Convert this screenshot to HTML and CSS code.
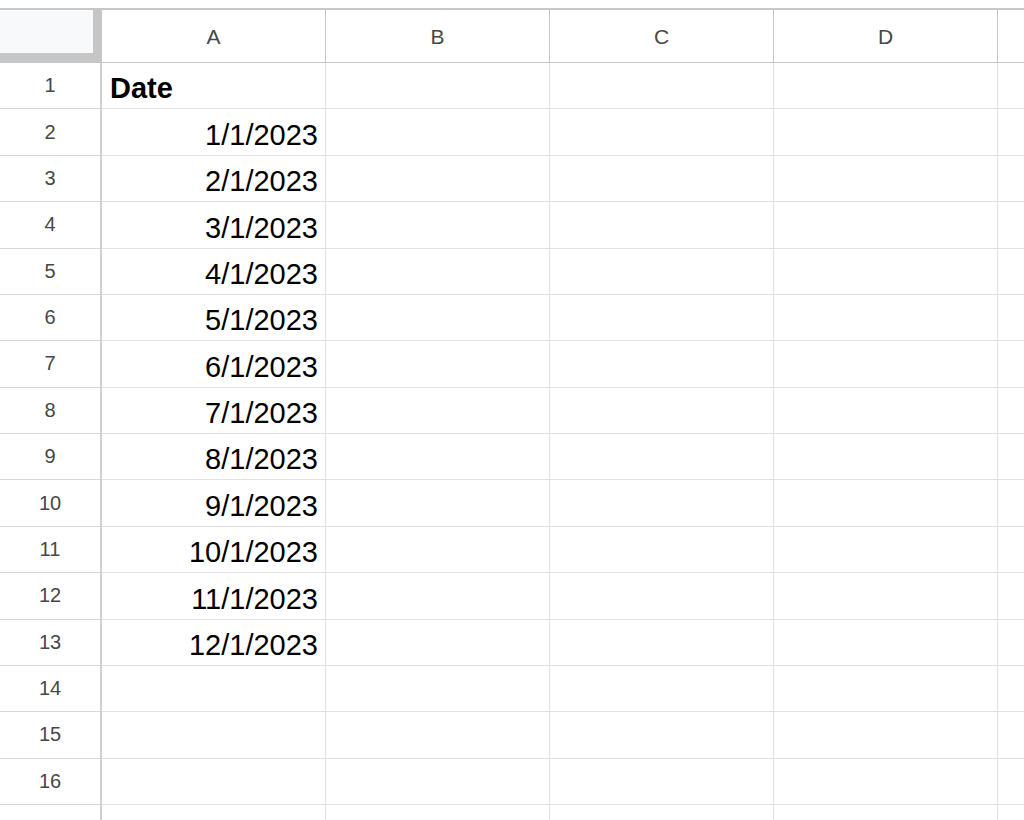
FILE: index.html
```html
<!DOCTYPE html>
<html lang="en">
<head>
  <meta charset="UTF-8">
  <meta name="viewport" content="width=device-width, initial-scale=1.0">
  <title>Sheet</title>
  <link rel="stylesheet" href="styles.css">
</head>
<body>
  <div class="sheet">
    <div class="row head">
      <div class="corner"></div>
      <div class="col">A</div>
      <div class="col">B</div>
      <div class="col">C</div>
      <div class="col">D</div>
      <div class="col"></div>
    </div>
    <div class="row"><div class="num">1</div><div class="cell bold">Date</div><div class="cell"></div><div class="cell"></div><div class="cell"></div><div class="cell"></div></div>
    <div class="row"><div class="num">2</div><div class="cell date">1/1/2023</div><div class="cell"></div><div class="cell"></div><div class="cell"></div><div class="cell"></div></div>
    <div class="row"><div class="num">3</div><div class="cell date">2/1/2023</div><div class="cell"></div><div class="cell"></div><div class="cell"></div><div class="cell"></div></div>
    <div class="row"><div class="num">4</div><div class="cell date">3/1/2023</div><div class="cell"></div><div class="cell"></div><div class="cell"></div><div class="cell"></div></div>
    <div class="row"><div class="num">5</div><div class="cell date">4/1/2023</div><div class="cell"></div><div class="cell"></div><div class="cell"></div><div class="cell"></div></div>
    <div class="row"><div class="num">6</div><div class="cell date">5/1/2023</div><div class="cell"></div><div class="cell"></div><div class="cell"></div><div class="cell"></div></div>
    <div class="row"><div class="num">7</div><div class="cell date">6/1/2023</div><div class="cell"></div><div class="cell"></div><div class="cell"></div><div class="cell"></div></div>
    <div class="row"><div class="num">8</div><div class="cell date">7/1/2023</div><div class="cell"></div><div class="cell"></div><div class="cell"></div><div class="cell"></div></div>
    <div class="row"><div class="num">9</div><div class="cell date">8/1/2023</div><div class="cell"></div><div class="cell"></div><div class="cell"></div><div class="cell"></div></div>
    <div class="row"><div class="num">10</div><div class="cell date">9/1/2023</div><div class="cell"></div><div class="cell"></div><div class="cell"></div><div class="cell"></div></div>
    <div class="row"><div class="num">11</div><div class="cell date">10/1/2023</div><div class="cell"></div><div class="cell"></div><div class="cell"></div><div class="cell"></div></div>
    <div class="row"><div class="num">12</div><div class="cell date">11/1/2023</div><div class="cell"></div><div class="cell"></div><div class="cell"></div><div class="cell"></div></div>
    <div class="row"><div class="num">13</div><div class="cell date">12/1/2023</div><div class="cell"></div><div class="cell"></div><div class="cell"></div><div class="cell"></div></div>
    <div class="row"><div class="num">14</div><div class="cell"></div><div class="cell"></div><div class="cell"></div><div class="cell"></div><div class="cell"></div></div>
    <div class="row"><div class="num">15</div><div class="cell"></div><div class="cell"></div><div class="cell"></div><div class="cell"></div><div class="cell"></div></div>
    <div class="row"><div class="num">16</div><div class="cell"></div><div class="cell"></div><div class="cell"></div><div class="cell"></div><div class="cell"></div></div>
    <div class="row"><div class="num">17</div><div class="cell"></div><div class="cell"></div><div class="cell"></div><div class="cell"></div><div class="cell"></div></div>
  </div>
</body>
</html>
```

FILE: styles.css
```css
body {
  margin: 0;
  background: #fff;
  font-family: "Liberation Sans", Arial, sans-serif;
  overflow: hidden;
}
.sheet {
  margin-top: 8px;
  border-top: 2px solid #c7c7c7;
  width: 1024px;
  height: 810px;
  overflow: hidden;
}
.row {
  display: flex;
  height: 46.375px;
}
.row.head {
  height: 53px;
}
.corner {
  flex: 0 0 102px;
  box-sizing: border-box;
  background: #f8f9fa;
  border-right: 9px solid #c6c6c6;
  border-bottom: 10px solid #c6c6c6;
}
.col {
  flex: 0 0 224px;
  box-sizing: border-box;
  border-right: 1px solid #c4c4c4;
  border-bottom: 1px solid #c4c4c4;
  display: flex;
  align-items: center;
  justify-content: center;
  padding-top: 1px;
  font-size: 21px;
  color: #474747;
}
.num {
  flex: 0 0 102px;
  box-sizing: border-box;
  border-right: 2px solid #cfcfcf;
  border-bottom: 1px solid #d6d6d6;
  display: flex;
  align-items: center;
  justify-content: center;
  font-size: 20px;
  color: #474747;
}
.cell {
  flex: 0 0 224px;
  box-sizing: border-box;
  border-right: 1px solid #e2e2e2;
  border-bottom: 1px solid #e2e2e2;
  display: flex;
  align-items: flex-end;
  padding: 0 7px 5px 8px;
  font-size: 29px;
  line-height: 29px;
  color: #000;
}
.cell.date {
  justify-content: flex-end;
}
.cell.bold {
  font-weight: bold;
}
```
